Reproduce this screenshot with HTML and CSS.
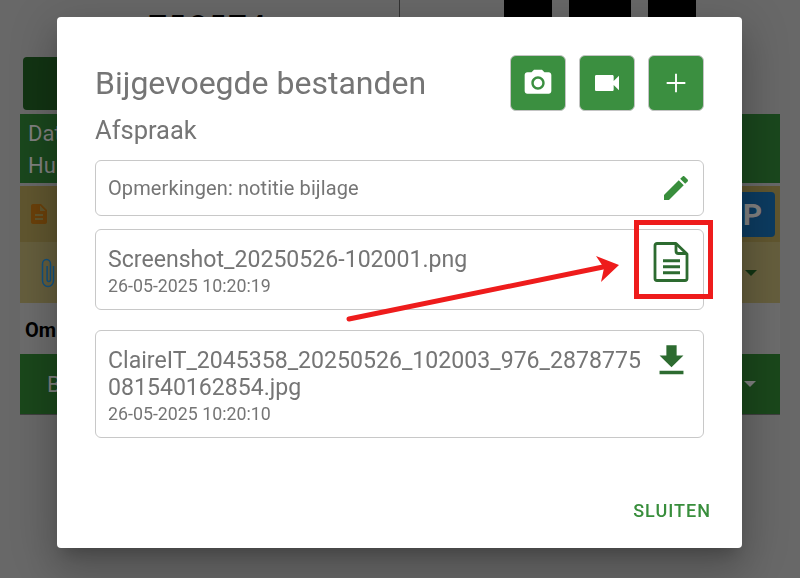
FILE: index.html
```html
<!DOCTYPE html>
<html lang="nl">
<head>
  <meta charset="UTF-8">
  <meta name="viewport" content="width=device-width, initial-scale=1.0">
  <title>Bijgevoegde bestanden</title>
  <link rel="stylesheet" href="styles.css">
</head>
<body>
  <!-- page behind the dialog -->
  <div class="page">
    <div class="top-row">
      <div class="plate">T5C5T4</div>
      <div class="photo">
        <svg width="192" height="57" viewBox="0 0 192 57"><rect x="56.5" y="-30" width="79" height="100" rx="30" fill="none" stroke="#686868" stroke-width="17"/></svg>
      </div>
    </div>
    <div class="tool-row"><div class="tool-btn"></div></div>
    <div class="info-panel">
      <div>Dat</div>
      <div>Hu</div>
    </div>
    <div class="yellow-row first">
      <svg class="doc-small" width="24" height="24" viewBox="0 0 24 24"><path d="M14 2H6c-1.100 0-2 .9-2 2v16c0 1.100.9 2 2 2h12c1.100 0 2-.9 2-2V8l-6-6zm2 16H8v-2h8v2zm0-4H8v-2h8v2zm-3-5V3.500L18.500 9H13z" fill="#6a400a"/></svg>
      <div class="parking">P</div>
    </div>
    <div class="yellow-row second">
      <svg class="clip" width="16" height="30" viewBox="0 0 16 30"><path d="M13.500 8v14.500a5.500 6 0 0 1-11 0V6a4 4.500 0 0 1 8 0v15.500a1.700 2 0 0 1-3.400 0V8" fill="none" stroke="#125280" stroke-width="1.500"/></svg>
      <span class="caret dark"></span>
    </div>
    <div class="remark-row">Om</div>
    <div class="green-row">
      <span>B</span>
      <span class="caret light"></span>
    </div>
  </div>

  <div class="overlay">
    <div class="dialog">
      <div class="dialog-head">
        <h2>Bijgevoegde bestanden</h2>
        <div class="head-buttons">
          <button class="icon-btn">
            <svg width="32" height="32" viewBox="0 0 24 24"><circle cx="12" cy="12" r="3.200"/><path d="M9 2L7.170 4H4c-1.100 0-2 .9-2 2v12c0 1.100.9 2 2 2h16c1.100 0 2-.9 2-2V6c0-1.100-.9-2-2-2h-3.170L15 2H9zm3 15c-2.760 0-5-2.240-5-5s2.240-5 5-5 5 2.240 5 5-2.240 5-5 5z"/></svg>
          </button>
          <button class="icon-btn">
            <svg width="32" height="32" viewBox="0 0 24 24"><path d="M17 10.500V7c0-.55-.45-1-1-1H4c-.55 0-1 .45-1 1v10c0 .55.45 1 1 1h12c.55 0 1-.45 1-1v-3.500l4 4v-11l-4 4z"/></svg>
          </button>
          <button class="icon-btn">
            <svg width="32" height="32" viewBox="0 0 24 24"><path d="M19 12.700h-6.300V19h-1.400v-6.300H5v-1.400h6.300V5h1.400v6.300H19z"/></svg>
          </button>
        </div>
      </div>
      <div class="subtitle">Afspraak</div>

      <div class="card note-card">
        <span>Opmerkingen: notitie bijlage</span>
        <svg class="pencil" width="32" height="32" viewBox="0 0 24 24"><path d="M3 17.250V21h3.750L17.810 9.940l-3.750-3.750L3 17.250zM20.710 7.040c.39-.39.39-1.020 0-1.410l-2.340-2.340c-.39-.39-1.020-.39-1.410 0l-1.830 1.830 3.750 3.750 1.830-1.830z"/></svg>
      </div>

      <div class="card file-card">
        <div class="file-text">
          <div class="file-name">Screenshot_20250526-102001.png</div>
          <div class="file-date">26-05-2025 10:20:19</div>
        </div>
        <svg class="doc-icon" width="36" height="40" viewBox="0 0 36 40"><path d="M4 1.500h19L34 12v24.500a2 2 0 0 1-2 2H4a2 2 0 0 1-2-2V3.500a2 2 0 0 1 2-2z" fill="none" stroke="#2d6b30" stroke-width="2.800" stroke-linejoin="round"/><path d="M23 1.500v7.500a2.500 2.500 0 0 0 2.500 2.500H34" fill="none" stroke="#2d6b30" stroke-width="2.800"/><path d="M10 17.300h17v3H10zM10 23.300h17v3H10zM10 29.200h17v3H10z" fill="#2d6b30"/></svg>
      </div>

      <div class="card file-card tall">
        <div class="file-text">
          <div class="file-name">ClaireIT_2045358_20250526_102003_976_2878775081540162854.jpg</div>
          <div class="file-date">26-05-2025 10:20:10</div>
        </div>
        <svg class="download" width="41" height="41" viewBox="0 0 24 24"><path d="M19 9h-4V3H9v6H5l7 7 7-7zM5 18v2h14v-2H5z"/></svg>
      </div>

      <div class="dialog-actions">
        <button class="text-btn">SLUITEN</button>
      </div>
    </div>
  </div>

  <!-- annotation drawn over the screenshot -->
  <div class="mark-box"></div>
  <svg class="mark-arrow" width="800" height="578" viewBox="0 0 800 578">
    <path d="M349 319L603 267" stroke="#ee1c1c" stroke-width="5" stroke-linecap="round" fill="none"/>
    <path d="M619 265L596 256L604 268L601 282z" fill="#ee1c1c"/>
  </svg>
</body>
</html>
```

FILE: styles.css
```css
html, body {
  height: 100%;
}
body {
  font-family: Roboto, "Liberation Sans", sans-serif;
  background-color: #686868;
  margin: 0;
  overflow: hidden;
}
.page {
  padding: 0 20px;
}
.top-row {
  height: 57px;
  position: relative;
}
.top-row::after {
  content: "";
  position: absolute;
  left: 379px;
  top: 0;
  width: 1px;
  height: 57px;
  background-color: #333;
}
.plate {
  position: absolute;
  left: 129px;
  top: 9px;
  color: #000;
  font-size: 28px;
  font-weight: 700;
  letter-spacing: 3px;
}
.photo {
  position: absolute;
  left: 484px;
  top: 0;
  width: 192px;
  height: 57px;
  background-color: #000;
  overflow: hidden;
}
.tool-row {
  height: 57px;
  padding-left: 3px;
}
.tool-btn {
  width: 100px;
  height: 53px;
  background-color: #123413;
  border-radius: 4px;
}
.info-panel {
  height: 69px;
  box-sizing: border-box;
  padding: 4px 8px;
  background-color: #1a471d;
  color: #808080;
  font-size: 22px;
  line-height: 32px;
}
.yellow-row {
  display: flex;
  align-items: center;
  justify-content: space-between;
}
.yellow-row.first {
  height: 56px;
  margin-top: 3px;
  padding: 0 5px 0 7px;
  background-color: #60562f;
}
.yellow-row.second {
  height: 61px;
  padding: 0 23px 0 20px;
  background-color: #655e3d;
}
.parking {
  width: 90px;
  height: 45px;
  border-radius: 4px;
  background-color: #0c3b60;
  color: #808080;
  font-size: 30px;
  font-weight: 700;
  line-height: 45px;
  text-align: right;
  padding-right: 13px;
  box-sizing: border-box;
}
.caret {
  width: 0;
  height: 0;
  border-left: 6px solid transparent;
  border-right: 6px solid transparent;
  border-top: 6px solid #123413;
}
.caret.light {
  border-top-color: #808080;
}
.remark-row {
  height: 51px;
  box-sizing: border-box;
  padding-left: 5px;
  background-color: #6c6c6c;
  color: #000;
  font-size: 20px;
  font-weight: 700;
  line-height: 55px;
}
.green-row {
  height: 60px;
  display: flex;
  align-items: center;
  justify-content: space-between;
  padding: 0 24px 0 27px;
  background-color: #1a471b;
  border-bottom: 1px solid #3f3f3f;
  color: #808080;
  font-size: 22px;
}
.overlay {
  position: fixed;
  left: 0;
  top: 0;
  width: 100%;
  height: 100%;
  display: flex;
  justify-content: center;
  align-items: flex-start;
  padding-top: 17px;
  box-sizing: border-box;
}
.dialog {
  width: 685px;
  height: 531px;
  box-sizing: border-box;
  padding: 38px 38px 0 38px;
  margin-left: -1px;
  background-color: white;
  border-radius: 4px;
  color: #757575;
  box-shadow: 0 11px 15px -7px rgba(0, 0, 0, 0.2), 0 24px 38px 3px rgba(0, 0, 0, 0.14), 0 9px 46px 8px rgba(0, 0, 0, 0.12);
}
.dialog-head {
  display: flex;
  justify-content: space-between;
  align-items: center;
  height: 56px;
}
h2 {
  margin: 0;
  font-size: 32px;
  font-weight: 400;
}
.head-buttons {
  display: flex;
  gap: 13px;
}
.icon-btn {
  width: 56px;
  height: 56px;
  padding: 0;
  display: flex;
  align-items: center;
  justify-content: center;
  background-color: #3b8f40;
  border: 1px solid #c4c4c4;
  border-radius: 6px;
}
.icon-btn svg {
  fill: white;
}
.subtitle {
  font-size: 25.500px;
  line-height: 30px;
  margin-top: 4px;
}
.card {
  display: flex;
  justify-content: space-between;
  box-sizing: border-box;
  border: 1px solid #c8c8c8;
  border-radius: 6px;
  padding: 0 12px;
}
.note-card {
  height: 56px;
  margin-top: 15px;
  align-items: center;
  font-size: 20px;
  letter-spacing: 0.1px;
}
.pencil {
  fill: #388e3c;
  margin-right: -1px;
}
.file-card {
  height: 81px;
  margin-top: 13px;
  padding-top: 16px;
}
.file-card.tall {
  height: 108px;
  margin-top: 20px;
}
.file-text {
  width: 534px;
}
.file-name {
  font-size: 23.100px;
  line-height: 27px;
  word-break: break-all;
}
.file-date {
  font-size: 17.800px;
  line-height: 22px;
  margin-top: 2px;
}
.doc-icon {
  margin: -4px 2px 0 0;
}
.download {
  fill: #2d6b30;
  margin: -7px -1px 0 0;
}
.dialog-actions {
  display: flex;
  justify-content: flex-end;
  margin: 62px -7px 0 0;
}
.text-btn {
  padding: 0;
  background: none;
  border: none;
  color: #388e3c;
  font-family: inherit;
  font-size: 18px;
  font-weight: 500;
  letter-spacing: 1px;
}
.mark-box {
  position: fixed;
  left: 634px;
  top: 220px;
  width: 69px;
  height: 69px;
  border: 5px solid #ee1c1c;
}
.mark-arrow {
  position: fixed;
  left: 0;
  top: 0;
}
```
